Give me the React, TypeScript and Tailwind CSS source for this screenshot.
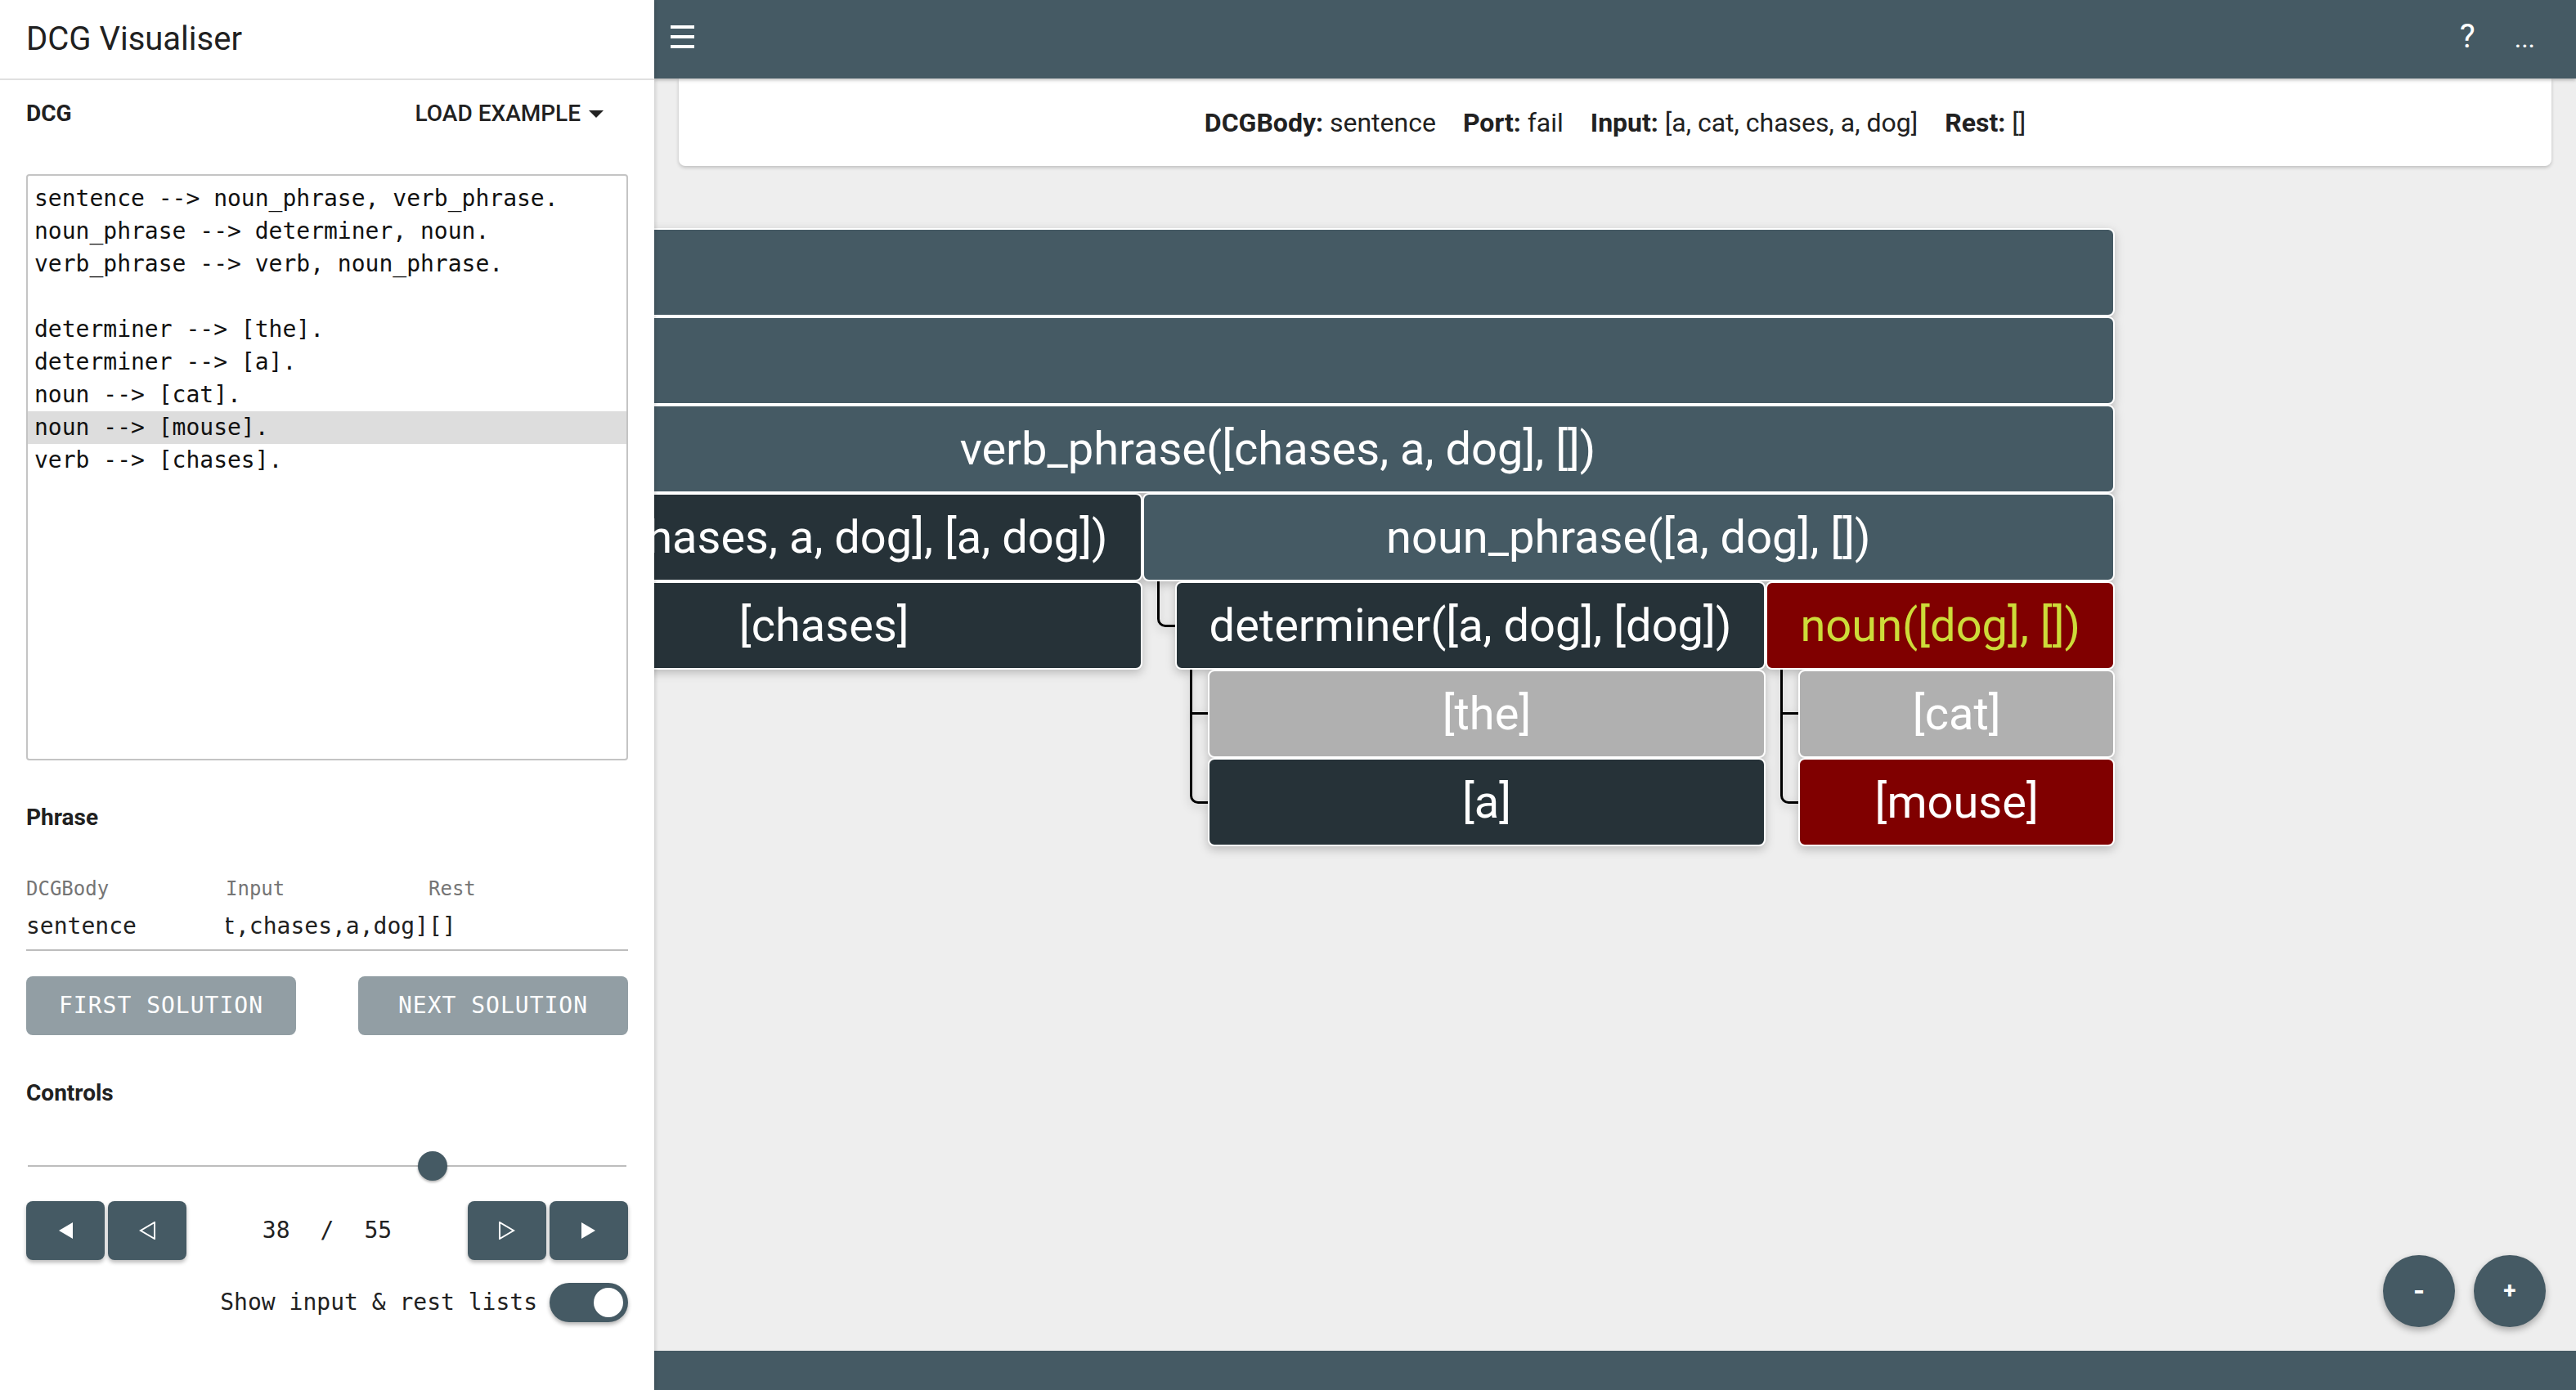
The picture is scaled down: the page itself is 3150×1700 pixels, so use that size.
import React from "react";

type Tone = "call" | "done" | "miss" | "fail" | "failLeaf";

interface TreeNodeData {
  label: string;
  tone: Tone;
  seq?: TreeNodeData[];
  alts?: TreeNodeData[];
}

const toneClass: Record<Tone, string> = {
  call: "bg-[#455a64] text-white",
  done: "bg-[#263238] text-white",
  miss: "bg-[#b0b0b0] text-white",
  fail: "bg-[#800000] text-[#cddc39]",
  failLeaf: "bg-[#800000] text-white",
};

const grammar = [
  "sentence --> noun_phrase, verb_phrase.",
  "noun_phrase --> determiner, noun.",
  "verb_phrase --> verb, noun_phrase.",
  "",
  "determiner --> [the].",
  "determiner --> [a].",
  "noun --> [cat].",
  "noun --> [mouse].",
  "verb --> [chases].",
];
const activeLine = 7;

// the left part of the tree is scrolled away behind the sidebar
const tree: TreeNodeData = {
  label: "",
  tone: "call",
  seq: [
    {
      label: "",
      tone: "call",
      seq: [
        {
          label: "noun_phrase([a, cat, chases, a, dog], [chases, a, dog])",
          tone: "done",
          seq: [
            {
              label: "determiner([a, cat, chases, a, dog], [cat, chases, a, dog])",
              tone: "done",
              alts: [
                { label: "[the]", tone: "miss" },
                { label: "[a]", tone: "done" },
              ],
            },
            {
              label: "noun([cat, chases, a, dog], [chases, a, dog])",
              tone: "done",
              alts: [{ label: "[cat]", tone: "done" }],
            },
          ],
        },
        {
          label: "verb_phrase([chases, a, dog], [])",
          tone: "call",
          seq: [
            {
              label: "verb([chases, a, dog], [a, dog])",
              tone: "done",
              alts: [{ label: "[chases]", tone: "done" }],
            },
            {
              label: "noun_phrase([a, dog], [])",
              tone: "call",
              seq: [
                {
                  label: "determiner([a, dog], [dog])",
                  tone: "done",
                  alts: [
                    { label: "[the]", tone: "miss" },
                    { label: "[a]", tone: "done" },
                  ],
                },
                {
                  label: "noun([dog], [])",
                  tone: "fail",
                  alts: [
                    { label: "[cat]", tone: "miss" },
                    { label: "[mouse]", tone: "failLeaf" },
                  ],
                },
              ],
            },
          ],
        },
      ],
    },
  ],
};

const mono = "font-['DejaVu_Sans_Mono',monospace]";

function Elbow() {
  return (
    <div className="w-[40px] shrink-0">
      <div className="ml-[18px] h-[56px] w-[22px] rounded-bl-[10px] border-b-[3px] border-l-[3px] border-black" />
    </div>
  );
}

function Tee() {
  return (
    <div className="flex w-[40px] shrink-0">
      <div className="ml-[18px] w-[22px] border-l-[3px] border-black">
        <div className="mt-[52px] h-[3px] bg-black" />
      </div>
    </div>
  );
}

function TreeNode({ node }: { node: TreeNodeData }) {
  return (
    <div className="flex grow flex-col">
      <div
        className={`flex h-[108px] items-center justify-center whitespace-nowrap rounded-lg border-2 border-white px-[40px] text-[56px] leading-none ${toneClass[node.tone]}`}
      >
        {node.label}
      </div>
      {node.seq && (
        <div className="flex">
          <Elbow />
          {node.seq.map((child, i) => (
            <TreeNode key={i} node={child} />
          ))}
        </div>
      )}
      {node.alts && (
        <div className="flex flex-col">
          {node.alts.map((child, i) => (
            <div key={i} className="flex">
              {i === node.alts!.length - 1 ? <Elbow /> : <Tee />}
              <TreeNode node={child} />
            </div>
          ))}
        </div>
      )}
    </div>
  );
}

function Triangle({ dir, filled }: { dir: "left" | "right"; filled: boolean }) {
  const points = dir === "left" ? "19,1 19,21 2,11" : "1,1 1,21 18,11";
  return (
    <svg width="20" height="22" viewBox="0 0 20 22">
      <polygon
        points={points}
        fill={filled ? "white" : "none"}
        stroke="white"
        strokeWidth={filled ? 0 : 2}
        strokeLinejoin="miter"
      />
    </svg>
  );
}

function NavButton({ children }: { children: React.ReactNode }) {
  return (
    <button className="flex h-[72px] w-[96px] items-center justify-center rounded-[8px] bg-[#455a64] shadow-[0_3px_5px_rgba(0,0,0,0.28)]">
      {children}
    </button>
  );
}

function Sidebar() {
  return (
    <aside className="relative z-20 flex w-[800px] shrink-0 flex-col bg-white shadow-[2px_0_4px_rgba(0,0,0,0.12)]">
      <div className="flex h-[98px] shrink-0 items-center border-b-2 border-[#e0e0e0] px-[32px] text-[40px]">
        DCG Visualiser
      </div>

      <div className="flex flex-col px-[32px]">
        <div className="flex h-[82px] items-center justify-between">
          <span className="text-[28px] font-bold">DCG</span>
          <button className="flex items-center gap-[10px] pr-[30px] text-[28px] font-medium uppercase">
            Load example
            <svg width="18" height="9" viewBox="0 0 18 9">
              <polygon points="0,0 18,0 9,9" fill="#212121" />
            </svg>
          </button>
        </div>

        <div className={`mt-[33px] h-[717px] rounded-[4px] border-2 border-[#c4c4c4] pt-[8px] text-[28px] text-[#111] ${mono}`}>
          {grammar.map((line, i) => (
            <div
              key={i}
              className={`h-[40px] whitespace-pre px-[8px] leading-[40px] ${i === activeLine ? "bg-[#dddddd]" : ""}`}
            >
              {line}
            </div>
          ))}
        </div>

        <div className="mt-[50px] h-[40px] text-[28px] font-bold leading-[40px]">Phrase</div>

        <div className={`mt-[51px] grid h-[32px] grid-cols-[244px_248px_1fr] text-[24px] leading-[32px] text-[#757575] ${mono}`}>
          <span>DCGBody</span>
          <span>Input</span>
          <span>Rest</span>
        </div>
        <div className={`mt-[10px] grid h-[40px] grid-cols-[244px_248px_1fr] text-[28px] leading-[40px] ${mono}`}>
          <span>sentence</span>
          <span className="flex justify-end overflow-hidden whitespace-nowrap">[a,cat,chases,a,dog]</span>
          <span>[]</span>
        </div>
        <div className="mt-[8px] h-[2px] bg-[#bdbdbd]" />

        <div className="mt-[31px] flex justify-between">
          <button className={`h-[72px] w-[330px] rounded-[8px] bg-[#929ea4] text-[28px] uppercase tracking-[1px] text-white ${mono}`}>
            First solution
          </button>
          <button className={`h-[72px] w-[330px] rounded-[8px] bg-[#929ea4] text-[28px] uppercase tracking-[1px] text-white ${mono}`}>
            Next solution
          </button>
        </div>

        <div className="mt-[51px] h-[40px] text-[28px] font-bold leading-[40px]">Controls</div>

        <div className="relative mt-[51px] h-[36px]">
          <div className="absolute left-[2px] right-[2px] top-[17px] h-[2px] bg-[#bdbdbd]" />
          <div className="absolute left-[479px] top-0 h-[36px] w-[36px] rounded-full bg-[#455a64] shadow-[0_2px_3px_rgba(0,0,0,0.3)]" />
        </div>

        <div className="mt-[25px] flex h-[72px] items-center justify-between">
          <div className="flex gap-[4px]">
            <NavButton>
              <Triangle dir="left" filled />
            </NavButton>
            <NavButton>
              <Triangle dir="left" filled={false} />
            </NavButton>
          </div>
          <div className={`flex gap-[37px] text-[28px] ${mono}`}>
            <span>38</span>
            <span>/</span>
            <span>55</span>
          </div>
          <div className="flex gap-[4px]">
            <NavButton>
              <Triangle dir="right" filled={false} />
            </NavButton>
            <NavButton>
              <Triangle dir="right" filled />
            </NavButton>
          </div>
        </div>

        <div className="mt-[28px] flex h-[48px] items-center justify-end gap-[15px]">
          <span className={`text-[28px] ${mono}`}>Show input &amp; rest lists</span>
          <div className="flex h-[48px] w-[96px] items-center justify-end rounded-full bg-[#455a64] pr-[6px] shadow-[0_3px_5px_rgba(0,0,0,0.3)]">
            <div className="h-[36px] w-[36px] rounded-full bg-white" />
          </div>
        </div>
      </div>
    </aside>
  );
}

export default function App() {
  return (
    <div className="flex h-[1700px] w-[3150px] overflow-hidden bg-[#eeeeee] font-['Roboto',sans-serif] text-[#212121]">
      <Sidebar />

      <main className="relative flex min-w-0 flex-1 flex-col">
        <header className="relative z-10 flex h-[96px] shrink-0 items-center justify-between bg-[#455a64] pl-[20px] pr-[50px] text-white shadow-[0_2px_4px_rgba(0,0,0,0.25)]">
          <button className="mb-[6px] flex flex-col gap-[8px]">
            <span className="h-[4px] w-[29px] bg-white" />
            <span className="h-[4px] w-[29px] bg-white" />
            <span className="h-[4px] w-[29px] bg-white" />
          </button>
          <div className="mb-[6px] flex items-baseline gap-[48px]">
            <span className="text-[40px] leading-none">?</span>
            <span className="text-[32px] leading-none">...</span>
          </div>
        </header>

        <div className="mx-[30px] flex h-[107px] shrink-0 items-center justify-center gap-[33px] rounded-b-lg bg-white text-[32px] shadow-[0_2px_4px_rgba(0,0,0,0.2)]">
          <span>
            <b className="font-bold">DCGBody:</b> sentence
          </span>
          <span>
            <b className="font-bold">Port:</b> fail
          </span>
          <span>
            <b className="font-bold">Input:</b> [a, cat, chases, a, dog]
          </span>
          <span>
            <b className="font-bold">Rest:</b> []
          </span>
        </div>

        <div className="flex flex-1 justify-end overflow-hidden pr-[564px] pt-[76px]">
          <div className="shrink-0 self-start drop-shadow-[0_4px_6px_rgba(0,0,0,0.22)]">
            <TreeNode node={tree} />
          </div>
        </div>

        <div className="absolute bottom-[77px] right-[37px] flex gap-[23px]">
          <button className="flex h-[88px] w-[88px] items-center justify-center rounded-full bg-[#455a64] text-[36px] font-bold leading-none text-white shadow-[0_4px_8px_rgba(0,0,0,0.3)]">
            -
          </button>
          <button className="flex h-[88px] w-[88px] items-center justify-center rounded-full bg-[#455a64] text-[28px] font-bold leading-none text-white shadow-[0_4px_8px_rgba(0,0,0,0.3)]">
            +
          </button>
        </div>

        <footer className="h-[48px] shrink-0 bg-[#455a64]" />
      </main>
    </div>
  );
}
